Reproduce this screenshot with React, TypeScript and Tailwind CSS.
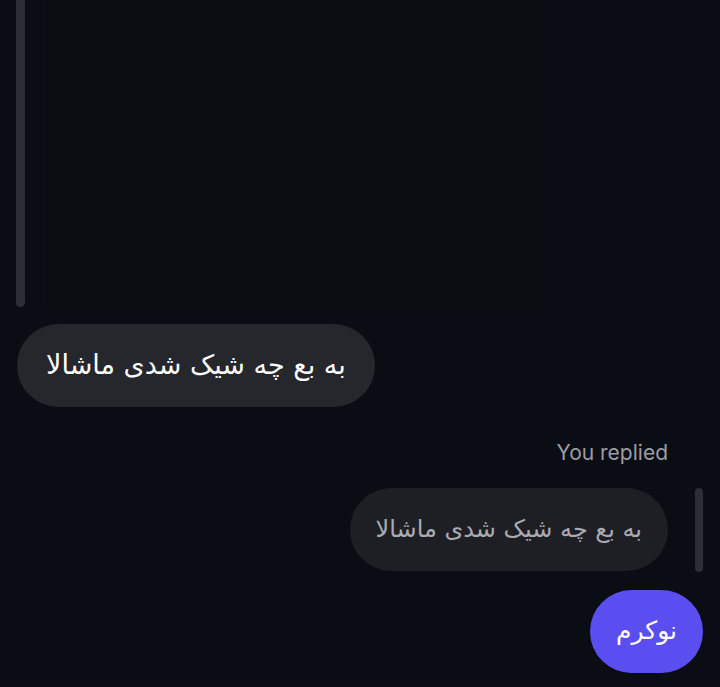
import React from 'react';

const arabic = { fontFamily: '"DejaVu Sans", "Noto Sans", sans-serif' };

const App: React.FC = () => {
  return (
    <div className="w-[720px] h-[687px] overflow-hidden bg-[#0b0d14] flex flex-col" style={{ fontFamily: 'Inter, "Liberation Sans", sans-serif' }}>
      {/* replied-to media preview */}
      <div className="flex h-[310px] pl-4">
        <div className="w-[9px] h-[307px] rounded-b-full bg-[#2b2e36]" />
        <div className="ml-[21px] w-[490px] h-full bg-[#0a0c11]" />
      </div>

      {/* incoming message */}
      <div
        dir="rtl"
        className="mt-[14px] ml-[17px] self-start h-[83px] px-[29px] flex items-center rounded-full bg-[#25272d] text-white text-[27px]"
        style={arabic}
      >
        به بع چه شیک شدی ماشالا
      </div>

      {/* reply label */}
      <div className="self-end mr-[52px] mt-[30px] text-[21px] text-[#9b9da4]">You replied</div>

      {/* quoted message */}
      <div className="mt-[19px] flex items-stretch justify-end pr-[17px] gap-[27px]">
        <div
          dir="rtl"
          className="h-[83px] px-[26px] flex items-center rounded-full bg-[#1d1f25] text-[#a9abb1] text-[24px]"
          style={arabic}
        >
          به بع چه شیک شدی ماشالا
        </div>
        <div className="w-[8px] h-[84px] rounded-full bg-[#2b2e36]" />
      </div>

      {/* my message */}
      <div
        dir="rtl"
        className="mt-[18px] mr-[17px] self-end h-[83px] w-[113px] flex items-center justify-center rounded-full bg-[#5b4ef0] text-white text-[25px]"
        style={arabic}
      >
        نوکرم
      </div>
    </div>
  );
};

export default App;
